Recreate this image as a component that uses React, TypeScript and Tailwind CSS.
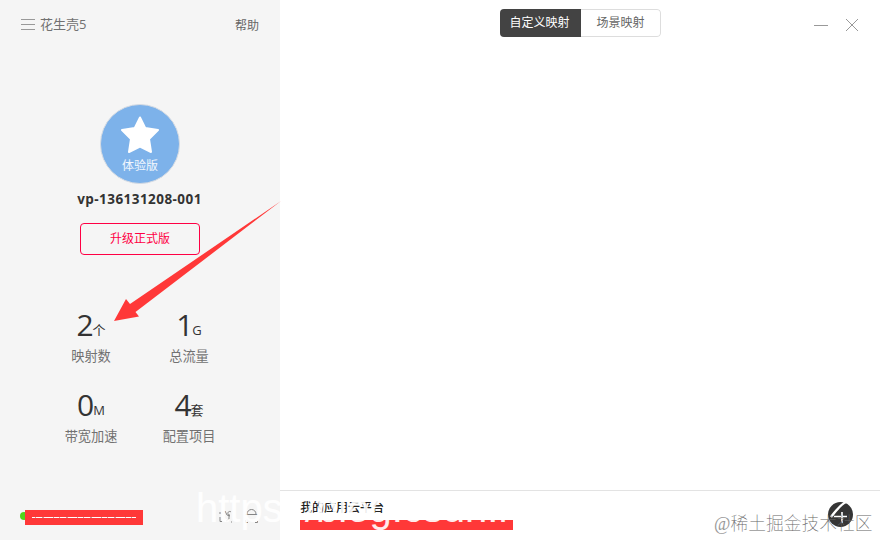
import { clsx } from 'clsx';

const STATS = [
  { value: '2', unit: '个', label: '映射数' },
  { value: '1', unit: 'G', label: '总流量' },
  { value: '0', unit: 'M', label: '带宽加速' },
  { value: '4', unit: '套', label: '配置项目' },
];

function Stat({ value, unit, label }: { value: string; unit: string; label: string }) {
  return (
    <div className="flex h-20 w-[98px] flex-col items-center">
      <div className="flex h-9 items-baseline leading-9 text-[#333]">
        <span className="text-[30px] tracking-[-1px]">{value}</span>
        <span className="-translate-y-[1.5px] text-[13px]">{unit}</span>
      </div>
      <div className="mt-[3px] text-[13.2px] leading-5 text-[#717171]">{label}</div>
    </div>
  );
}

function Sidebar() {
  return (
    <aside className="flex h-full w-[280px] shrink-0 flex-col bg-[#f5f5f5]">
      {/* Header */}
      <div className="flex h-[50px] items-center pl-[21px] pr-[21px]">
        <svg width="14" height="12" viewBox="0 0 14 12" stroke="#999" shapeRendering="crispEdges">
          <path d="M0 .5h14M0 5.5h14M0 10.5h14" />
        </svg>
        <span className="ml-[5px] text-[13px] text-[#717171]">花生壳5</span>
        <span className="ml-auto mt-0.5 text-xs text-[#666]">帮助</span>
      </div>

      {/* Account */}
      <div className="mt-[54px] flex flex-col items-center">
        <div className="flex size-20 flex-col items-center rounded-full border border-[#d5dbe3] bg-[#7db2ea]">
          <svg className="mt-[11px]" width="38" height="37" viewBox="0 0 38 37" fill="#fff" stroke="#fff" strokeWidth="2" strokeLinejoin="round">
            <path d="M19 1.5 24.2 12 37 14 28 23 30 36 19 30.5 8 36 10 23 1 14 13.8 12Z" />
          </svg>
          <span className="mt-1 text-xs leading-[18px] text-white/90">体验版</span>
        </div>
        <div className="mt-[5px] pr-px text-[13.5px] font-bold leading-5 tracking-[0.45px] text-[#333]">vp-136131208-001</div>
        <button className="mt-[14px] h-8 w-[120px] rounded border border-[#ff0044] text-xs text-[#ff0044]">升级正式版</button>
      </div>

      {/* Statistics */}
      <div className="mx-[42px] mt-[52px] flex flex-wrap">
        {STATS.map((stat) => (
          <Stat key={stat.label} {...stat} />
        ))}
      </div>

      {/* Status */}
      <div className="mt-auto flex h-[46px] items-center pl-5 pr-[22px]">
        <span className="-mt-0.5 size-2 rounded-full bg-[#52d41a]" />
        <div className="-ml-[3px] mt-px h-[15px] w-[118px] bg-[#ff3838]">
          <svg width="118" height="15" viewBox="0 0 118 15" shapeRendering="crispEdges">
            <path d="M7 7.5h104" stroke="#fff" />
            <path d="M10 7.5h98" stroke="#c9a0a0" strokeDasharray="1 6 2 9 1 5" />
          </svg>
        </div>
        <svg className="-mt-[3px] ml-auto" width="14" height="14" viewBox="0 0 14 14" fill="none" stroke="#858585">
          <path d="M1 3v2M1 8v4.5h2M6 2l2 4 3 1M12 3a1.8 1.8 0 1 0-1 3M10 6v4l-3 2M12 13h1" />
        </svg>
        <svg className="-mt-[3px] ml-3" width="13" height="14" viewBox="0 0 13 14" fill="none" stroke="#858585">
          <path d="M.5 5.5h12M2 5a4.5 4.5 0 0 1 9 0M.5 11v2.5H3M10 13.5h2.5V12" />
        </svg>
      </div>
    </aside>
  );
}

function Tab({ children, active }: { children: string; active?: boolean }) {
  return (
    <button className={clsx('h-full text-xs', active ? 'w-[81px] bg-[#434343] pr-0.5 text-white' : 'w-20 rounded-r border border-l-0 border-[#ddd] text-[#666]')}>
      {children}
    </button>
  );
}

function Main() {
  return (
    <main className="flex min-w-0 flex-1 flex-col bg-white">
      <div className="flex items-start pl-[220px] pr-[21px] pt-[9px]">
        <div className="flex h-7 overflow-hidden rounded">
          <Tab active>自定义映射</Tab>
          <Tab>场景映射</Tab>
        </div>
        <svg className="ml-auto mt-[9px]" width="46" height="14" viewBox="0 0 46 14" stroke="#999" fill="none">
          <path d="M1 7.5h14" />
          <path d="m33 1 12 12M45 1 33 13" />
        </svg>
      </div>

      <footer className="mt-auto flex h-[50px] items-start border-t border-[#e3e3e3] pl-5 pr-[27px]">
        <div className="pt-[7px]">
          <div className="text-xs font-medium leading-5 text-[#222]">我的应用云平台</div>
          <div className="mt-0.5 h-2.5 w-[213px] bg-[#ff3838]" />
        </div>
        <svg className="ml-auto mt-[11px]" width="25" height="25" viewBox="0 0 25 25">
          <circle cx="12.5" cy="12.5" r="12.5" fill="#353535" />
          <path d="M18 0Q12 3 3 15" fill="none" stroke="#fff" strokeWidth="2.4" />
          <path d="M6 14.5h13M14 10v11" fill="none" stroke="#fff" strokeWidth="1.6" />
        </svg>
      </footer>
    </main>
  );
}

export default function App() {
  return (
    <div className="relative flex h-[540px] w-[880px] overflow-hidden font-['Open_Sans','Noto_Sans_CJK_SC',sans-serif]">
      <Sidebar />
      <Main />

      {/* Pointer arrow */}
      <svg className="absolute left-0 top-0" width="290" height="330" viewBox="0 0 290 330" fill="#ff3838">
        <path d="M281 201 130 304 126 299 114 321 139 316.5 135.5 312Z" />
      </svg>

      {/* Watermarks */}
      <div className="absolute left-[196px] top-[485px] whitespace-nowrap font-['Liberation_Sans',sans-serif] text-[40px] leading-[46px] text-white/90">
        https://blog.csdn.net/
      </div>
      <div className="absolute left-[714px] top-[510px] whitespace-nowrap font-['Liberation_Serif','Noto_Sans_CJK_SC',serif] text-[17.8px] font-thin leading-7 text-[#666]">
        <span className="text-[#999]">@</span>稀土掘金技术社区
      </div>
    </div>
  );
}
